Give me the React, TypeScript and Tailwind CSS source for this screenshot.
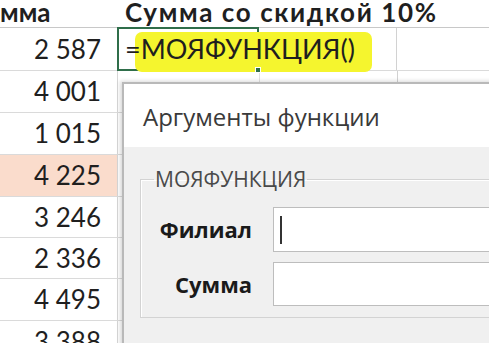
import React from 'react';

const rows = [
  { value: '2 587', h: 'h-[43px]' },
  { value: '4 001', h: 'h-[42px]' },
  { value: '1 015', h: 'h-[42px]' },
  { value: '4 225', h: 'h-[42px]', marked: true },
  { value: '3 246', h: 'h-[41px]' },
  { value: '2 336', h: 'h-[41px]' },
  { value: '4 495', h: 'h-[42px]' },
  { value: '3 388', h: 'h-[42px]' },
];

const Sheet = () => (
  <div className="font-['Lato',sans-serif] text-[#1f1f1f]">
    <div className="flex h-[28px] border-b border-[#c8c8c8]">
      <div className="w-[118px] shrink-0 text-[26px] font-bold leading-[25px]">мма</div>
      <div className="pl-[7px] text-[26px] font-bold leading-[25px] tracking-[1.6px] whitespace-nowrap">
        Сумма со скидкой 10%
      </div>
    </div>
    {rows.map((row, i) => (
      <div key={row.value} className={`flex ${row.h} border-b border-[#dadada]`}>
        <div
          className={`w-[118px] shrink-0 flex items-center justify-end pr-[16px] text-[26px] border-r border-[#d6d6d6] ${
            row.marked ? 'bg-[#fadccc]' : ''
          }`}
        >
          {row.value}
        </div>
        {i === 0 ? (
          <>
            <div className="relative w-[142px] shrink-0 border-2 border-[#2f6e4a] -mt-[1px] -mb-[1px] -ml-[1px] flex items-center">
              <span className="absolute left-[16px] top-[3px] h-[40px] w-[237px] rounded-[7px] bg-[#f5f52e] blur-[0.6px]" />
              <span className="relative pl-[6px] text-[27px] leading-[30px] whitespace-nowrap">=МОЯФУНКЦИЯ()</span>
              <span className="absolute -right-[4px] -bottom-[4px] w-[6px] h-[6px] bg-[#2f6e4a] border border-white" />
            </div>
            <div className="w-[138px] shrink-0 border-r border-[#d2d2d2]" />
            <div className="flex-1" />
          </>
        ) : (
          <>
            <div className="w-[142px] shrink-0 border-r border-[#e2e2e2]" />
            <div className="w-[138px] shrink-0 border-r border-[#d2d2d2]" />
            <div className="flex-1" />
          </>
        )}
      </div>
    ))}
  </div>
);

const ArgsDialog = () => (
  <div className="absolute left-[122px] top-[82px] w-[420px] h-[300px] border-l-2 border-t-2 border-[#b9b9b9] bg-[#f0f0f0] shadow-[-2px_-1px_4px_rgba(0,0,0,0.15)] font-['Open_Sans',sans-serif]">
    <div className="h-[63px] bg-white pl-[19px] pt-[17px] text-[24px] leading-[32px] text-[#3a3a3a]">
      Аргументы функции
    </div>
    <fieldset className="ml-[16px] mt-[19px] w-[420px] h-[152px] border border-[#d3d3d3] pl-0 pr-0 shadow-[inset_1px_1px_0_#fff]">
      <legend className="ml-[13px] px-[1px] text-[21px] leading-[26px] text-[#4a4a4a]">МОЯФУНКЦИЯ</legend>
      <div className="grid grid-cols-[111px_1fr] gap-x-[21px] gap-y-[10px] pt-[15px]">
        <div className="flex items-center justify-end text-[22px] font-bold text-[#1a1a1a]">Филиал</div>
        <div className="h-[45px] bg-white border border-[#bdbdbd] flex items-center pl-[6px]">
          <span className="w-[2px] h-[28px] bg-[#333]" />
        </div>
        <div className="flex items-center justify-end text-[22px] font-bold text-[#1a1a1a]">Сумма</div>
        <div className="h-[44px] bg-white border border-[#bdbdbd]" />
      </div>
    </fieldset>
  </div>
);

export default function App() {
  return (
    <div className="relative w-[489px] h-[343px] overflow-hidden bg-white">
      <Sheet />
      <ArgsDialog />
    </div>
  );
}
